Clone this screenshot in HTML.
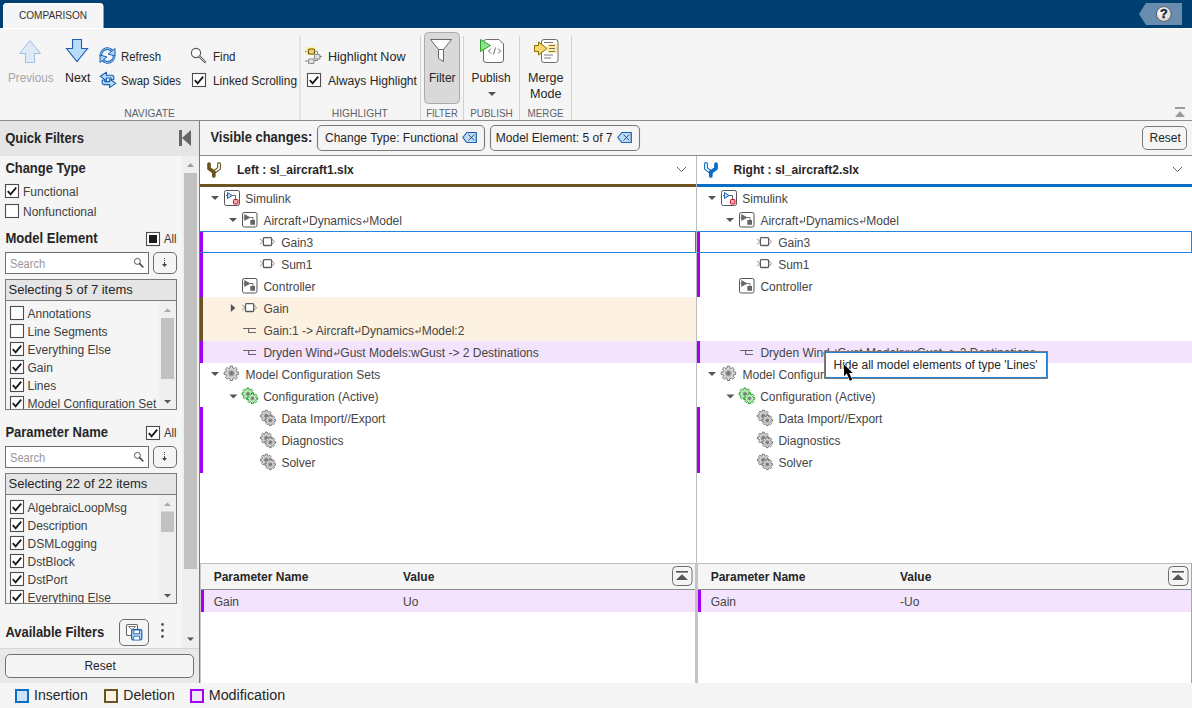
<!DOCTYPE html>
<html><head><meta charset="utf-8">
<style>
html,body{margin:0;padding:0;background:#f5f5f5;width:1192px;height:708px;overflow:hidden}
svg{display:block}
text{font-family:"Liberation Sans",sans-serif;font-size:12px;fill:#262626}
.b{font-weight:bold}
.t{fill:#3a3a3a}
.lab{font-size:10.5px;fill:#5d636b}
</style></head><body>
<svg width="1192" height="708" viewBox="0 0 1192 708">

<rect x="0" y="0" width="1192" height="28" fill="#003f72"/>
<rect x="0" y="28" width="1192" height="1" fill="#ffffff"/>
<path d="M3.5 28 V6 Q3.5 3.5 6 3.5 H100.5 Q103 3.5 103 6 V28" fill="#f5f5f5" stroke="#ffffff" stroke-width="1"/>
<text x="19" y="19" style="font-size:11px;fill:#333" textLength="68" lengthAdjust="spacingAndGlyphs" >COMPARISON</text>
<polygon points="1146,3 1182,3 1182,25 1146,25 1139,14" fill="#6a8cae"/>
<defs><radialGradient id="hg" cx="0.4" cy="0.35" r="0.7"><stop offset="0" stop-color="#ffffff"/><stop offset="1" stop-color="#d0d0d0"/></radialGradient></defs>
<circle cx="1163.8" cy="14" r="7.4" fill="url(#hg)" stroke="#3c4a5a" stroke-width="0.8"/>
<text x="1163.8" y="18.4" style="font-size:12.5px;fill:#1d2a3a;font-weight:bold" text-anchor="middle" stroke="#1d2a3a" stroke-width="0.5">?</text>
<rect x="0" y="29" width="1192" height="91" fill="#f5f5f5"/>
<rect x="0" y="120" width="1192" height="1" fill="#8c8c8c"/>
<rect x="299.5" y="36" width="1" height="84" fill="#d2d2d2"/>
<rect x="420" y="36" width="1" height="84" fill="#d2d2d2"/>
<rect x="463" y="36" width="1" height="84" fill="#d2d2d2"/>
<rect x="519" y="36" width="1" height="84" fill="#d2d2d2"/>
<rect x="571" y="36" width="1" height="84" fill="#d2d2d2"/>
<path d="M30 40.5 L40.5 53.5 L34.5 53.5 L34.5 62.5 L25.5 62.5 L25.5 53.5 L19.5 53.5 Z" fill="#deebf7" stroke="#9fbfdf" stroke-width="1"/>
<text x="8" y="81.6" style="fill:#a6a6a6" textLength="45.5" lengthAdjust="spacingAndGlyphs" >Previous</text>
<path d="M72.5 39.5 L81.5 39.5 L81.5 48.5 L87.5 48.5 L77 61.5 L66.5 48.5 L72.5 48.5 Z" fill="#b9dcfb" stroke="#1f5fb0" stroke-width="1.1"/>
<text x="65" y="81.6" style="fill:#1a1a1a" textLength="25.5" lengthAdjust="spacingAndGlyphs" >Next</text>
<g fill="none" stroke-linecap="butt"><path d="M101.3 57 A6.3 6.3 0 0 1 112.3 51.2" stroke="#1a62b8" stroke-width="2.8"/><path d="M101.3 57 A6.3 6.3 0 0 1 112.3 51.2" stroke="#a9d3f7" stroke-width="1"/><path d="M113.7 54 A6.3 6.3 0 0 1 102.7 59.8" stroke="#1a62b8" stroke-width="2.8"/><path d="M113.7 54 A6.3 6.3 0 0 1 102.7 59.8" stroke="#a9d3f7" stroke-width="1"/></g><path d="M115 48.5 L115 56 L108 54 Z" fill="#a9d3f7" stroke="#1a62b8" stroke-width="1" stroke-linejoin="round"/><path d="M100 62.5 L100 55 L107 57 Z" fill="#a9d3f7" stroke="#1a62b8" stroke-width="1" stroke-linejoin="round"/>
<text x="121" y="61" textLength="40" lengthAdjust="spacingAndGlyphs" >Refresh</text>
<g stroke="#1a5fb4" stroke-width="1.1" fill="#b3dbfb" stroke-linejoin="round"><path d="M100.2 76.3 L106.5 72.2 V75.3 H112 Q113.8 75.3 113.8 77 V79.8 H111.2 V78 H106.5 V80.6 Z"/><path d="M115.8 83.4 L109.6 87.6 V84.6 H104 Q102.2 84.6 102.2 82.8 V80 H104.8 V81.6 H109.6 V79.3 Z"/></g>
<text x="121" y="84.5" textLength="60" lengthAdjust="spacingAndGlyphs" >Swap Sides</text>
<circle cx="196" cy="53" r="4.6" fill="#fafafa" stroke="#555" stroke-width="1.1"/><path d="M199.5 56.5 L205 62" stroke="#555" stroke-width="2.4" stroke-linecap="round"/><path d="M199.5 56.5 L205 62" stroke="#e6e6e6" stroke-width="0.9" stroke-linecap="round"/>
<text x="213" y="61" textLength="22.5" lengthAdjust="spacingAndGlyphs" >Find</text>
<rect x="192.5" y="73.5" width="13" height="13" fill="#ffffff" stroke="#4d4d4d" stroke-width="1.1"/>
<path d="M194.8 80.2 L197.6 83.3 L203.2 76.6" fill="none" stroke="#1a1a1a" stroke-width="1.85" stroke-linejoin="miter" stroke-linecap="butt"/>
<text x="213" y="84.8" textLength="84" lengthAdjust="spacingAndGlyphs" >Linked Scrolling</text>
<g stroke="#8a8a8a" stroke-width="1" fill="none"><path d="M305 51.5 H308 M314.5 51.5 H317.5 V54.5 M320 56.5 H322 M314 60.5 H317.5 V58.5 M305 61 H308"/></g><rect x="306.5" y="47.5" width="9" height="7.5" fill="#ffe96b"/><rect x="308.5" y="49" width="6" height="5" rx="1" fill="#f3d36d" stroke="#6b5a20" stroke-width="1.1"/><rect x="314.5" y="54.5" width="5.5" height="4.5" rx="1" fill="#e3e3e3" stroke="#8c8c8c" stroke-width="1.1"/><rect x="308.5" y="59" width="5.5" height="4.5" rx="1" fill="#e3e3e3" stroke="#8c8c8c" stroke-width="1.1"/>
<text x="328" y="61" textLength="77.5" lengthAdjust="spacingAndGlyphs" >Highlight Now</text>
<rect x="307.5" y="73.5" width="13" height="13" fill="#ffffff" stroke="#4d4d4d" stroke-width="1.1"/>
<path d="M309.8 80.2 L312.6 83.3 L318.2 76.6" fill="none" stroke="#1a1a1a" stroke-width="1.85" stroke-linejoin="miter" stroke-linecap="butt"/>
<text x="328" y="84.8" textLength="89" lengthAdjust="spacingAndGlyphs" >Always Highlight</text>
<rect x="424.5" y="32.5" width="35" height="71" rx="4" fill="#d9d9d9" stroke="#ababab" stroke-width="1"/>
<path d="M430.5 39.5 H451.5 L443.5 49.5 V61.5 L438.5 58.5 V49.5 Z" fill="#ffffff" stroke="#666" stroke-width="1"/><path d="M438.5 49.5 H443.5" stroke="#666" stroke-width="1"/>
<text x="429" y="81.7" textLength="26.5" lengthAdjust="spacingAndGlyphs" >Filter</text>
<path d="M486.5 39.5 H499 L503.5 44 V60 Q503.5 62.5 501 62.5 H486 Q483.5 62.5 483.5 60 V42 Q483.5 39.5 486.5 39.5 Z" fill="#ffffff" stroke="#6b6b6b" stroke-width="1"/><path d="M491 48.5 L488.5 51 L491 53.5 M495.5 47.5 L493.5 54.5 M498 48.5 L500.5 51 L498 53.5" fill="none" stroke="#555" stroke-width="0.9"/><path d="M480.5 39.5 L490.5 45.5 L480.5 51.5 Z" fill="#8fe08f" stroke="#28a428" stroke-width="1"/>
<text x="471.5" y="81.7" textLength="39" lengthAdjust="spacingAndGlyphs" >Publish</text>
<path d="M488 92 H496 L492 96 Z" fill="#555"/>
<rect x="541.5" y="39.5" width="16.5" height="23" rx="2.5" fill="#ffffff" stroke="#6b6b6b" stroke-width="1"/>
<rect x="547" y="44" width="10" height="9" fill="#ffeaa0"/>
<g stroke="#666" stroke-width="0.9"><path d="M544 42.5 H553 M549 45.5 H555 M549 48.5 H555 M549 51.5 H555 M544 55 H553 M544 58 H551"/></g>
<path d="M534.5 45.5 H538.5 V42 L547 48.5 L538.5 55 V51.5 H534.5 Z" fill="#f7d86a" stroke="#8a6d00" stroke-width="1"/>
<text x="528" y="81.7" textLength="35.5" lengthAdjust="spacingAndGlyphs" >Merge</text>
<text x="530" y="97.7" textLength="31.5" lengthAdjust="spacingAndGlyphs" >Mode</text>
<text x="124.3" y="116.6" class="lab" textLength="50.5" lengthAdjust="spacingAndGlyphs" >NAVIGATE</text>
<text x="331.8" y="116.6" class="lab" textLength="56.1" lengthAdjust="spacingAndGlyphs" >HIGHLIGHT</text>
<text x="426.2" y="116.6" class="lab" textLength="31.7" lengthAdjust="spacingAndGlyphs" >FILTER</text>
<text x="470.2" y="116.6" class="lab" textLength="42.5" lengthAdjust="spacingAndGlyphs" >PUBLISH</text>
<text x="527.6" y="116.6" class="lab" textLength="36" lengthAdjust="spacingAndGlyphs" >MERGE</text>
<rect x="1175" y="107" width="10" height="2" fill="#9a9a9a"/><path d="M1175 117 L1180 111 L1185 117 Z" fill="#9a9a9a"/>
<rect x="0" y="121" width="199" height="35" fill="#e5e5e5"/>
<rect x="0" y="156" width="199" height="492" fill="#f5f5f5"/>
<rect x="182" y="156" width="17" height="492" fill="#efefef"/>
<rect x="184" y="173" width="13" height="396" fill="#c1c1c1"/>
<path d="M187 167 L190.5 163 L194 167 Z" fill="#a0a0a0"/>
<path d="M187 637.5 L194 637.5 L190.5 641 Z" fill="#555"/>
<rect x="0" y="648" width="199" height="1" fill="#d6d6d6"/>
<rect x="0" y="649" width="199" height="34" fill="#e9e9e9"/>
<text x="5.2" y="143.2" class="b" style="font-size:14px;fill:#262626" textLength="78.8" lengthAdjust="spacingAndGlyphs" >Quick Filters</text>
<rect x="179" y="130" width="3" height="16" fill="#666"/><path d="M191 130 L182 138 L191 146 Z" fill="#666"/>
<text x="5.4" y="172.9" class="b" style="font-size:14px;fill:#262626" textLength="80.3" lengthAdjust="spacingAndGlyphs" >Change Type</text>
<rect x="5.5" y="184.5" width="13" height="13" fill="#ffffff" stroke="#4d4d4d" stroke-width="1.1"/>
<path d="M7.8 191.2 L10.6 194.3 L16.2 187.6" fill="none" stroke="#1a1a1a" stroke-width="1.85" stroke-linejoin="miter" stroke-linecap="butt"/>
<text x="23" y="195.6" style="fill:#404040" >Functional</text>
<rect x="5.5" y="204.5" width="13" height="13" fill="#ffffff" stroke="#4d4d4d" stroke-width="1.1"/>
<text x="23" y="215.5" style="fill:#404040" >Nonfunctional</text>
<text x="5.4" y="243" class="b" style="font-size:14px;fill:#262626" textLength="92.2" lengthAdjust="spacingAndGlyphs" >Model Element</text>
<rect x="146.5" y="232.5" width="13" height="13" fill="#ffffff" stroke="#4d4d4d" stroke-width="1.1"/>
<rect x="149" y="235" width="8" height="8" fill="#1a1a1a"/>
<text x="164" y="243" style="fill:#333" textLength="12.5" lengthAdjust="spacingAndGlyphs" >All</text>
<rect x="5.5" y="252.5" width="143" height="21" fill="#ffffff" stroke="#6e6e6e" stroke-width="1"/>
<text x="10" y="267.8" style="fill:#999999" textLength="35.3" lengthAdjust="spacingAndGlyphs" >Search</text>
<circle cx="137.4" cy="261.4" r="3" fill="none" stroke="#555" stroke-width="1"/><path d="M139.6 263.6 L142.8 266.8" stroke="#555" stroke-width="1.8" stroke-linecap="round"/>
<rect x="153.5" y="252.5" width="23" height="21" rx="4.5" fill="#f5f5f5" stroke="#6e6e6e" stroke-width="1"/>
<g fill="#444"><rect x="164" y="258" width="1" height="1"/><rect x="164" y="260" width="1" height="1"/><rect x="164" y="262" width="1" height="2"/><path d="M162 264 H167 L164.5 267 Z"/></g>
<rect x="5.5" y="279.5" width="171" height="130" fill="#f5f5f5" stroke="#7a7a7a" stroke-width="1"/>
<rect x="6" y="280" width="170" height="20" fill="#e5e5e5"/>
<rect x="6" y="300" width="170" height="1" fill="#7a7a7a"/>
<text x="8.5" y="293.8" style="font-size:13px;fill:#262626" >Selecting 5 of 7 items</text>
<rect x="159" y="301" width="17" height="108" fill="#efefef"/>
<rect x="161" y="318" width="13" height="61" fill="#c1c1c1"/>
<path d="M164 312 L167.5 308.5 L171 312 Z" fill="#a8a8a8"/>
<path d="M164 400 L171 400 L167.5 403.5 Z" fill="#555"/>
<clipPath id="clip0"><rect x="6" y="301" width="153" height="108"/></clipPath>
<g clip-path="url(#clip0)">
<rect x="10.5" y="306.5" width="13" height="13" fill="#ffffff" stroke="#4d4d4d" stroke-width="1.1"/>
<text x="27.5" y="317.5" style="fill:#404040" >Annotations</text>
<rect x="10.5" y="324.5" width="13" height="13" fill="#ffffff" stroke="#4d4d4d" stroke-width="1.1"/>
<text x="27.5" y="335.5" style="fill:#404040" >Line Segments</text>
<rect x="10.5" y="342.5" width="13" height="13" fill="#ffffff" stroke="#4d4d4d" stroke-width="1.1"/>
<path d="M12.8 349.2 L15.6 352.3 L21.2 345.6" fill="none" stroke="#1a1a1a" stroke-width="1.85" stroke-linejoin="miter" stroke-linecap="butt"/>
<text x="27.5" y="353.5" style="fill:#404040" >Everything Else</text>
<rect x="10.5" y="360.5" width="13" height="13" fill="#ffffff" stroke="#4d4d4d" stroke-width="1.1"/>
<path d="M12.8 367.2 L15.6 370.3 L21.2 363.6" fill="none" stroke="#1a1a1a" stroke-width="1.85" stroke-linejoin="miter" stroke-linecap="butt"/>
<text x="27.5" y="371.5" style="fill:#404040" >Gain</text>
<rect x="10.5" y="378.5" width="13" height="13" fill="#ffffff" stroke="#4d4d4d" stroke-width="1.1"/>
<path d="M12.8 385.2 L15.6 388.3 L21.2 381.6" fill="none" stroke="#1a1a1a" stroke-width="1.85" stroke-linejoin="miter" stroke-linecap="butt"/>
<text x="27.5" y="389.5" style="fill:#404040" >Lines</text>
<rect x="10.5" y="396.5" width="13" height="13" fill="#ffffff" stroke="#4d4d4d" stroke-width="1.1"/>
<path d="M12.8 403.2 L15.6 406.3 L21.2 399.6" fill="none" stroke="#1a1a1a" stroke-width="1.85" stroke-linejoin="miter" stroke-linecap="butt"/>
<text x="27.5" y="407.5" style="fill:#404040" >Model Configuration Set</text>
</g>
<text x="5.4" y="437" class="b" style="font-size:14px;fill:#262626" textLength="102.6" lengthAdjust="spacingAndGlyphs" >Parameter Name</text>
<rect x="146.5" y="426.5" width="13" height="13" fill="#ffffff" stroke="#4d4d4d" stroke-width="1.1"/>
<path d="M148.8 433.2 L151.6 436.3 L157.2 429.6" fill="none" stroke="#1a1a1a" stroke-width="1.85"/>
<text x="164" y="437" style="fill:#333" textLength="12.5" lengthAdjust="spacingAndGlyphs" >All</text>
<rect x="5.5" y="446.5" width="143" height="21" fill="#ffffff" stroke="#6e6e6e" stroke-width="1"/>
<text x="10" y="461.8" style="fill:#999999" textLength="35.3" lengthAdjust="spacingAndGlyphs" >Search</text>
<circle cx="137.4" cy="455.4" r="3" fill="none" stroke="#555" stroke-width="1"/><path d="M139.6 457.6 L142.8 460.8" stroke="#555" stroke-width="1.8" stroke-linecap="round"/>
<rect x="153.5" y="446.5" width="23" height="21" rx="4.5" fill="#f5f5f5" stroke="#6e6e6e" stroke-width="1"/>
<g fill="#444"><rect x="164" y="452" width="1" height="1"/><rect x="164" y="454" width="1" height="1"/><rect x="164" y="456" width="1" height="2"/><path d="M162 458 H167 L164.5 461 Z"/></g>
<rect x="5.5" y="473.5" width="171" height="130" fill="#f5f5f5" stroke="#7a7a7a" stroke-width="1"/>
<rect x="6" y="474" width="170" height="20" fill="#e5e5e5"/>
<rect x="6" y="494" width="170" height="1" fill="#7a7a7a"/>
<text x="8.5" y="487.8" style="font-size:13px;fill:#262626" >Selecting 22 of 22 items</text>
<rect x="159" y="495" width="17" height="108" fill="#efefef"/>
<rect x="161" y="511.5" width="13" height="20.5" fill="#c1c1c1"/>
<path d="M164 506 L167.5 502.5 L171 506 Z" fill="#a8a8a8"/>
<path d="M164 594 L171 594 L167.5 597.5 Z" fill="#555"/>
<clipPath id="clip194"><rect x="6" y="495" width="153" height="108"/></clipPath>
<g clip-path="url(#clip194)">
<rect x="10.5" y="500.5" width="13" height="13" fill="#ffffff" stroke="#4d4d4d" stroke-width="1.1"/>
<path d="M12.8 507.2 L15.6 510.3 L21.2 503.6" fill="none" stroke="#1a1a1a" stroke-width="1.85" stroke-linejoin="miter" stroke-linecap="butt"/>
<text x="27.5" y="511.5" style="fill:#404040" >AlgebraicLoopMsg</text>
<rect x="10.5" y="518.5" width="13" height="13" fill="#ffffff" stroke="#4d4d4d" stroke-width="1.1"/>
<path d="M12.8 525.2 L15.6 528.3 L21.2 521.6" fill="none" stroke="#1a1a1a" stroke-width="1.85" stroke-linejoin="miter" stroke-linecap="butt"/>
<text x="27.5" y="529.5" style="fill:#404040" >Description</text>
<rect x="10.5" y="536.5" width="13" height="13" fill="#ffffff" stroke="#4d4d4d" stroke-width="1.1"/>
<path d="M12.8 543.2 L15.6 546.3 L21.2 539.6" fill="none" stroke="#1a1a1a" stroke-width="1.85" stroke-linejoin="miter" stroke-linecap="butt"/>
<text x="27.5" y="547.5" style="fill:#404040" >DSMLogging</text>
<rect x="10.5" y="554.5" width="13" height="13" fill="#ffffff" stroke="#4d4d4d" stroke-width="1.1"/>
<path d="M12.8 561.2 L15.6 564.3 L21.2 557.6" fill="none" stroke="#1a1a1a" stroke-width="1.85" stroke-linejoin="miter" stroke-linecap="butt"/>
<text x="27.5" y="565.5" style="fill:#404040" >DstBlock</text>
<rect x="10.5" y="572.5" width="13" height="13" fill="#ffffff" stroke="#4d4d4d" stroke-width="1.1"/>
<path d="M12.8 579.2 L15.6 582.3 L21.2 575.6" fill="none" stroke="#1a1a1a" stroke-width="1.85" stroke-linejoin="miter" stroke-linecap="butt"/>
<text x="27.5" y="583.5" style="fill:#404040" >DstPort</text>
<rect x="10.5" y="590.5" width="13" height="13" fill="#ffffff" stroke="#4d4d4d" stroke-width="1.1"/>
<path d="M12.8 597.2 L15.6 600.3 L21.2 593.6" fill="none" stroke="#1a1a1a" stroke-width="1.85" stroke-linejoin="miter" stroke-linecap="butt"/>
<text x="27.5" y="601.5" style="fill:#404040" >Everything Else</text>
</g>
<text x="5.4" y="637" class="b" style="font-size:14px;fill:#262626" textLength="98.9" lengthAdjust="spacingAndGlyphs" >Available Filters</text>
<rect x="119.5" y="619.5" width="29" height="26" rx="4.5" fill="#f5f5f5" stroke="#6e6e6e" stroke-width="1"/>
<rect x="126.5" y="624.5" width="11" height="11" rx="1.3" fill="#fff" stroke="#666" stroke-width="1.1"/><path d="M128.5 626.5 H135.5 L133 629.2 H131 Z" fill="none" stroke="#666" stroke-width="0.9"/><rect x="131.6" y="629.6" width="10.2" height="10.2" rx="1.2" fill="#bfdcf7" stroke="#1a62b8" stroke-width="1.2"/><rect x="133.8" y="630" width="5.8" height="3.8" fill="#fff" stroke="#1a62b8" stroke-width="0.9"/><path d="M133.8 639.6 V636.2 H139.6 V639.6" fill="#fff" stroke="#1a62b8" stroke-width="0.9"/>
<g fill="#555"><circle cx="162.5" cy="624.5" r="1.4"/><circle cx="162.5" cy="630.5" r="1.4"/><circle cx="162.5" cy="636.5" r="1.4"/></g>
<rect x="5.5" y="654.5" width="188" height="23" rx="4.5" fill="#f5f5f5" stroke="#707070" stroke-width="1"/>
<text x="84.4" y="670" style="fill:#262626" >Reset</text>
<rect x="199" y="121" width="1" height="562" fill="#7a7a7a"/>
<rect x="200" y="121" width="992" height="34" fill="#f5f5f5"/>
<rect x="200" y="155" width="992" height="1" fill="#8c8c8c"/>
<text x="210.4" y="142.2" class="b" style="font-size:14px;fill:#262626" textLength="101.9" lengthAdjust="spacingAndGlyphs" >Visible changes:</text>
<rect x="317.5" y="125.5" width="167" height="25" rx="4.5" fill="#f5f5f5" stroke="#7a7a7a" stroke-width="1.1"/>
<text x="325" y="142" style="fill:#262626" >Change Type: Functional</text>
<path d="M462.8 137.5 L466.8 132.5 H476.3 V142.5 H466.8 Z" fill="#bfdcf7" stroke="#1a5fb4" stroke-width="1.2" stroke-linejoin="round"/><path d="M468.5 134.5 L474.3 140.5 M474.3 134.5 L468.5 140.5" stroke="#1f3f70" stroke-width="0.9"/>
<rect x="490.5" y="125.5" width="149" height="25" rx="4.5" fill="#f5f5f5" stroke="#7a7a7a" stroke-width="1.1"/>
<text x="495.8" y="142" style="fill:#262626" >Model Element: 5 of 7</text>
<path d="M617.8 137.5 L621.8 132.5 H631.3 V142.5 H621.8 Z" fill="#bfdcf7" stroke="#1a5fb4" stroke-width="1.2" stroke-linejoin="round"/><path d="M623.5 134.5 L629.3 140.5 M629.3 134.5 L623.5 140.5" stroke="#1f3f70" stroke-width="0.9"/>
<rect x="1142.5" y="126.5" width="44" height="23" rx="4.5" fill="#f5f5f5" stroke="#7a7a7a" stroke-width="1"/>
<text x="1149.5" y="142.3" style="fill:#262626" >Reset</text>
<rect x="200" y="156" width="992" height="527" fill="#ffffff"/>
<rect x="200" y="297" width="496" height="44" fill="#fdf1e1"/>
<rect x="200" y="297" width="3" height="44" fill="#6e5322"/>
<rect x="200" y="341" width="496" height="22" fill="#f3e3fc"/>
<rect x="200" y="231" width="3" height="66" fill="#a100f2"/>
<rect x="200" y="341" width="3" height="22" fill="#a100f2"/>
<rect x="200" y="407" width="3" height="66" fill="#a100f2"/>
<rect x="200.5" y="231.5" width="495" height="21" fill="none" stroke="#2484da" stroke-width="1"/>
<rect x="200" y="232" width="3" height="20" fill="#a100f2"/>
<path d="M211 196 H219 L215 200 Z" fill="#555"/>
<rect x="224.5" y="190.5" width="15" height="15" rx="1.8" fill="#fff" stroke="#555" stroke-width="1"/>
<path d="M227.5 192.5 L232 195.5 L227.5 198.5 Z" fill="#bfe0fb" stroke="#1a62b8" stroke-width="1"/>
<path d="M226 195.5 H227.5 M232 195.5 H235.5 V199" fill="none" stroke="#555" stroke-width="0.9"/>
<rect x="233.5" y="199.5" width="4.5" height="4.5" rx="0.8" fill="#f7a8a8" stroke="#c8102e" stroke-width="1"/>
<text x="245.3" y="202.8" style="fill:#454545" >Simulink</text>
<path d="M229 218 H237 L233 222 Z" fill="#555"/>
<rect x="242.5" y="212.5" width="14.5" height="14.5" rx="1.8" fill="#fff" stroke="#555" stroke-width="1"/>
<path d="M244.5 214.5 L250 217.5 L244.5 220.5 Z" fill="#666" stroke="#666" stroke-width="0.6"/>
<path d="M243.5 217.5 H244.5 M250 217.5 H253 V220" fill="none" stroke="#666" stroke-width="0.9"/>
<rect x="250.3" y="220" width="4.7" height="4.8" fill="#666"/>
<text x="263.4" y="224.6" style="fill:#454545" >Aircraft</text>
<path d="M307.50625 217.2 V221.79999999999998 H302.90625 M304.60625 220.1 L302.90625 221.79999999999998 L304.60625 223.5" fill="none" stroke="#505050" stroke-width="0.95"/>
<text x="309.01" y="224.6" style="fill:#454545" >Dynamics</text>
<path d="M367.78125000000006 217.2 V221.79999999999998 H363.18125000000003 M364.88125 220.1 L363.18125000000003 221.79999999999998 L364.88125 223.5" fill="none" stroke="#505050" stroke-width="0.95"/>
<text x="369.28" y="224.6" style="fill:#454545" >Model</text>
<rect x="263.4" y="237.70000000000002" width="8.2" height="7.8" rx="0.9" fill="#fff" stroke="#5c5c5c" stroke-width="1.3"/>
<path d="M260.0 239.0 L262.9 241.60000000000002 L260.0 244.20000000000002 M272.09999999999997 239.10000000000002 L274.5 241.60000000000002 L272.09999999999997 244.10000000000002" fill="none" stroke="#777" stroke-width="0.8"/>
<text x="281.2" y="246.5" style="fill:#454545" >Gain3</text>
<rect x="263.4" y="259.7" width="8.2" height="7.8" rx="0.9" fill="#fff" stroke="#5c5c5c" stroke-width="1.3"/>
<path d="M260.0 261.0 L262.9 263.6 L260.0 266.2 M272.09999999999997 261.1 L274.5 263.6 L272.09999999999997 266.1" fill="none" stroke="#777" stroke-width="0.8"/>
<text x="281.2" y="268.5" style="fill:#454545" >Sum1</text>
<rect x="242.5" y="278.5" width="14.5" height="14.5" rx="1.8" fill="#fff" stroke="#555" stroke-width="1"/>
<path d="M244.5 280.5 L250 283.5 L244.5 286.5 Z" fill="#666" stroke="#666" stroke-width="0.6"/>
<path d="M243.5 283.5 H244.5 M250 283.5 H253 V286" fill="none" stroke="#666" stroke-width="0.9"/>
<rect x="250.3" y="286" width="4.7" height="4.8" fill="#666"/>
<text x="263.4" y="290.6" style="fill:#454545" >Controller</text>
<path d="M230.8 304 V312 L235.3 308 Z" fill="#555"/>
<rect x="245.5" y="303.7" width="8.2" height="7.8" rx="0.9" fill="#fff" stroke="#5c5c5c" stroke-width="1.3"/>
<path d="M242.10000000000002 305.0 L245.0 307.6 L242.10000000000002 310.2 M254.20000000000002 305.1 L256.6 307.6 L254.20000000000002 310.1" fill="none" stroke="#777" stroke-width="0.8"/>
<text x="263.4" y="312.6" style="fill:#454545" >Gain</text>
<path d="M243 328.5 H256 M248.6 328 V332.5 H256" fill="none" stroke="#666" stroke-width="1.1"/>
<text x="263.4" y="334.6" style="fill:#454545" >Gain:1 -&gt; Aircraft</text>
<path d="M359.871875 327.20000000000005 V331.8 H355.27187499999997 M356.97187499999995 330.1 L355.27187499999997 331.8 L356.97187499999995 333.5" fill="none" stroke="#505050" stroke-width="0.95"/>
<text x="361.37" y="334.6" style="fill:#454545" >Dynamics</text>
<path d="M420.146875 327.20000000000005 V331.8 H415.546875 M417.246875 330.1 L415.546875 331.8 L417.246875 333.5" fill="none" stroke="#505050" stroke-width="0.95"/>
<text x="421.65" y="334.6" style="fill:#454545" >Model:2</text>
<path d="M243 350.5 H256 M248.6 350 V354.5 H256" fill="none" stroke="#666" stroke-width="1.1"/>
<text x="263.4" y="356.6" style="fill:#454545" >Dryden Wind</text>
<path d="M338.85625 349.20000000000005 V353.8 H334.25624999999997 M335.95624999999995 352.1 L334.25624999999997 353.8 L335.95624999999995 355.5" fill="none" stroke="#505050" stroke-width="0.95"/>
<text x="340.36" y="356.6" style="fill:#454545" >Gust Models:wGust -&gt; 2 Destinations</text>
<path d="M211 372 H219 L215 376 Z" fill="#555"/>
<defs><radialGradient id="gg" cx="0.5" cy="0.5" r="0.5"><stop offset="0" stop-color="#6a6a6a"/><stop offset="0.28" stop-color="#8c8c8c"/><stop offset="0.5" stop-color="#cfcfcf"/><stop offset="1" stop-color="#e6e6e6"/></radialGradient><radialGradient id="gG" cx="0.5" cy="0.5" r="0.5"><stop offset="0" stop-color="#6a6a6a"/><stop offset="0.28" stop-color="#8c9c8c"/><stop offset="0.5" stop-color="#c4eec4"/><stop offset="1" stop-color="#d6f6d6"/></radialGradient></defs>
<path d="M230.06 367.92 L230.20 366.10 L232.60 366.10 L232.74 367.92 L234.26 368.55 L235.64 367.36 L237.34 369.06 L236.15 370.44 L236.78 371.96 L238.60 372.10 L238.60 374.50 L236.78 374.64 L236.15 376.16 L237.34 377.54 L235.64 379.24 L234.26 378.05 L232.74 378.68 L232.60 380.50 L230.20 380.50 L230.06 378.68 L228.54 378.05 L227.16 379.24 L225.46 377.54 L226.65 376.16 L226.02 374.64 L224.20 374.50 L224.20 372.10 L226.02 371.96 L226.65 370.44 L225.46 369.06 L227.16 367.36 L228.54 368.55 Z" fill="url(#gg)" stroke="#7a7a7a" stroke-width="1" stroke-linejoin="round"/>
<text x="245.5" y="378.6" style="fill:#454545" >Model Configuration Sets</text>
<path d="M229.4 394.5 H237.4 L233.4 398.5 Z" fill="#555"/>
<path d="M246.82 389.55 L246.93 388.08 L248.87 388.08 L248.98 389.55 L250.21 390.06 L251.33 389.10 L252.70 390.47 L251.74 391.59 L252.25 392.82 L253.72 392.93 L253.72 394.87 L252.25 394.98 L251.74 396.21 L252.70 397.33 L251.33 398.70 L250.21 397.74 L248.98 398.25 L248.87 399.72 L246.93 399.72 L246.82 398.25 L245.59 397.74 L244.47 398.70 L243.10 397.33 L244.06 396.21 L243.55 394.98 L242.08 394.87 L242.08 392.93 L243.55 392.82 L244.06 391.59 L243.10 390.47 L244.47 389.10 L245.59 390.06 Z" fill="url(#gG)" stroke="#1e9e1e" stroke-width="1" stroke-linejoin="round"/>
<path d="M251.43 394.49 L251.53 393.17 L253.27 393.17 L253.37 394.49 L254.48 394.95 L255.48 394.09 L256.71 395.32 L255.85 396.32 L256.31 397.43 L257.63 397.53 L257.63 399.27 L256.31 399.37 L255.85 400.48 L256.71 401.48 L255.48 402.71 L254.48 401.85 L253.37 402.31 L253.27 403.63 L251.53 403.63 L251.43 402.31 L250.32 401.85 L249.32 402.71 L248.09 401.48 L248.95 400.48 L248.49 399.37 L247.17 399.27 L247.17 397.53 L248.49 397.43 L248.95 396.32 L248.09 395.32 L249.32 394.09 L250.32 394.95 Z" fill="url(#gG)" stroke="#1e9e1e" stroke-width="1" stroke-linejoin="round"/>
<text x="263.2" y="400.6" style="fill:#454545" >Configuration (Active)</text>
<path d="M265.22 411.65 L265.33 410.18 L267.27 410.18 L267.38 411.65 L268.61 412.16 L269.73 411.20 L271.10 412.57 L270.14 413.69 L270.65 414.92 L272.12 415.03 L272.12 416.97 L270.65 417.08 L270.14 418.31 L271.10 419.43 L269.73 420.80 L268.61 419.84 L267.38 420.35 L267.27 421.82 L265.33 421.82 L265.22 420.35 L263.99 419.84 L262.87 420.80 L261.50 419.43 L262.46 418.31 L261.95 417.08 L260.48 416.97 L260.48 415.03 L261.95 414.92 L262.46 413.69 L261.50 412.57 L262.87 411.20 L263.99 412.16 Z" fill="url(#gg)" stroke="#767676" stroke-width="1" stroke-linejoin="round"/>
<path d="M269.33 416.49 L269.43 415.17 L271.17 415.17 L271.27 416.49 L272.38 416.95 L273.38 416.09 L274.61 417.32 L273.75 418.32 L274.21 419.43 L275.53 419.53 L275.53 421.27 L274.21 421.37 L273.75 422.48 L274.61 423.48 L273.38 424.71 L272.38 423.85 L271.27 424.31 L271.17 425.63 L269.43 425.63 L269.33 424.31 L268.22 423.85 L267.22 424.71 L265.99 423.48 L266.85 422.48 L266.39 421.37 L265.07 421.27 L265.07 419.53 L266.39 419.43 L266.85 418.32 L265.99 417.32 L267.22 416.09 L268.22 416.95 Z" fill="url(#gg)" stroke="#767676" stroke-width="1" stroke-linejoin="round"/>
<text x="281.4" y="422.6" style="fill:#454545" >Data Import//Export</text>
<path d="M265.22 433.65 L265.33 432.18 L267.27 432.18 L267.38 433.65 L268.61 434.16 L269.73 433.20 L271.10 434.57 L270.14 435.69 L270.65 436.92 L272.12 437.03 L272.12 438.97 L270.65 439.08 L270.14 440.31 L271.10 441.43 L269.73 442.80 L268.61 441.84 L267.38 442.35 L267.27 443.82 L265.33 443.82 L265.22 442.35 L263.99 441.84 L262.87 442.80 L261.50 441.43 L262.46 440.31 L261.95 439.08 L260.48 438.97 L260.48 437.03 L261.95 436.92 L262.46 435.69 L261.50 434.57 L262.87 433.20 L263.99 434.16 Z" fill="url(#gg)" stroke="#767676" stroke-width="1" stroke-linejoin="round"/>
<path d="M269.33 438.49 L269.43 437.17 L271.17 437.17 L271.27 438.49 L272.38 438.95 L273.38 438.09 L274.61 439.32 L273.75 440.32 L274.21 441.43 L275.53 441.53 L275.53 443.27 L274.21 443.37 L273.75 444.48 L274.61 445.48 L273.38 446.71 L272.38 445.85 L271.27 446.31 L271.17 447.63 L269.43 447.63 L269.33 446.31 L268.22 445.85 L267.22 446.71 L265.99 445.48 L266.85 444.48 L266.39 443.37 L265.07 443.27 L265.07 441.53 L266.39 441.43 L266.85 440.32 L265.99 439.32 L267.22 438.09 L268.22 438.95 Z" fill="url(#gg)" stroke="#767676" stroke-width="1" stroke-linejoin="round"/>
<text x="281.4" y="444.6" style="fill:#454545" >Diagnostics</text>
<path d="M265.22 455.65 L265.33 454.18 L267.27 454.18 L267.38 455.65 L268.61 456.16 L269.73 455.20 L271.10 456.57 L270.14 457.69 L270.65 458.92 L272.12 459.03 L272.12 460.97 L270.65 461.08 L270.14 462.31 L271.10 463.43 L269.73 464.80 L268.61 463.84 L267.38 464.35 L267.27 465.82 L265.33 465.82 L265.22 464.35 L263.99 463.84 L262.87 464.80 L261.50 463.43 L262.46 462.31 L261.95 461.08 L260.48 460.97 L260.48 459.03 L261.95 458.92 L262.46 457.69 L261.50 456.57 L262.87 455.20 L263.99 456.16 Z" fill="url(#gg)" stroke="#767676" stroke-width="1" stroke-linejoin="round"/>
<path d="M269.33 460.49 L269.43 459.17 L271.17 459.17 L271.27 460.49 L272.38 460.95 L273.38 460.09 L274.61 461.32 L273.75 462.32 L274.21 463.43 L275.53 463.53 L275.53 465.27 L274.21 465.37 L273.75 466.48 L274.61 467.48 L273.38 468.71 L272.38 467.85 L271.27 468.31 L271.17 469.63 L269.43 469.63 L269.33 468.31 L268.22 467.85 L267.22 468.71 L265.99 467.48 L266.85 466.48 L266.39 465.37 L265.07 465.27 L265.07 463.53 L266.39 463.43 L266.85 462.32 L265.99 461.32 L267.22 460.09 L268.22 460.95 Z" fill="url(#gg)" stroke="#767676" stroke-width="1" stroke-linejoin="round"/>
<text x="281.4" y="466.6" style="fill:#454545" >Solver</text>
<rect x="697" y="341" width="495" height="22" fill="#f3e3fc"/>
<rect x="697" y="231" width="3" height="66" fill="#a100f2"/>
<rect x="697" y="341" width="3" height="22" fill="#a100f2"/>
<rect x="697" y="407" width="3" height="66" fill="#a100f2"/>
<rect x="697.5" y="231.5" width="494" height="21" fill="none" stroke="#2484da" stroke-width="1"/>
<rect x="697" y="232" width="3" height="20" fill="#a100f2"/>
<path d="M708 196 H716 L712 200 Z" fill="#555"/>
<rect x="721.5" y="190.5" width="15" height="15" rx="1.8" fill="#fff" stroke="#555" stroke-width="1"/>
<path d="M724.5 192.5 L729 195.5 L724.5 198.5 Z" fill="#bfe0fb" stroke="#1a62b8" stroke-width="1"/>
<path d="M723 195.5 H724.5 M729 195.5 H732.5 V199" fill="none" stroke="#555" stroke-width="0.9"/>
<rect x="730.5" y="199.5" width="4.5" height="4.5" rx="0.8" fill="#f7a8a8" stroke="#c8102e" stroke-width="1"/>
<text x="742.3" y="202.8" style="fill:#454545" >Simulink</text>
<path d="M726 218 H734 L730 222 Z" fill="#555"/>
<rect x="739.5" y="212.5" width="14.5" height="14.5" rx="1.8" fill="#fff" stroke="#555" stroke-width="1"/>
<path d="M741.5 214.5 L747 217.5 L741.5 220.5 Z" fill="#666" stroke="#666" stroke-width="0.6"/>
<path d="M740.5 217.5 H741.5 M747 217.5 H750 V220" fill="none" stroke="#666" stroke-width="0.9"/>
<rect x="747.3" y="220" width="4.7" height="4.8" fill="#666"/>
<text x="760.4" y="224.6" style="fill:#454545" >Aircraft</text>
<path d="M804.5062499999999 217.2 V221.79999999999998 H799.90625 M801.6062499999999 220.1 L799.90625 221.79999999999998 L801.6062499999999 223.5" fill="none" stroke="#505050" stroke-width="0.95"/>
<text x="806.01" y="224.6" style="fill:#454545" >Dynamics</text>
<path d="M864.7812499999999 217.2 V221.79999999999998 H860.18125 M861.8812499999999 220.1 L860.18125 221.79999999999998 L861.8812499999999 223.5" fill="none" stroke="#505050" stroke-width="0.95"/>
<text x="866.28" y="224.6" style="fill:#454545" >Model</text>
<rect x="760.4000000000001" y="237.70000000000002" width="8.2" height="7.8" rx="0.9" fill="#fff" stroke="#5c5c5c" stroke-width="1.3"/>
<path d="M757.0 239.0 L759.9000000000001 241.60000000000002 L757.0 244.20000000000002 M769.1 239.10000000000002 L771.5 241.60000000000002 L769.1 244.10000000000002" fill="none" stroke="#777" stroke-width="0.8"/>
<text x="778.2" y="246.5" style="fill:#454545" >Gain3</text>
<rect x="760.4000000000001" y="259.7" width="8.2" height="7.8" rx="0.9" fill="#fff" stroke="#5c5c5c" stroke-width="1.3"/>
<path d="M757.0 261.0 L759.9000000000001 263.6 L757.0 266.2 M769.1 261.1 L771.5 263.6 L769.1 266.1" fill="none" stroke="#777" stroke-width="0.8"/>
<text x="778.2" y="268.5" style="fill:#454545" >Sum1</text>
<rect x="739.5" y="278.5" width="14.5" height="14.5" rx="1.8" fill="#fff" stroke="#555" stroke-width="1"/>
<path d="M741.5 280.5 L747 283.5 L741.5 286.5 Z" fill="#666" stroke="#666" stroke-width="0.6"/>
<path d="M740.5 283.5 H741.5 M747 283.5 H750 V286" fill="none" stroke="#666" stroke-width="0.9"/>
<rect x="747.3" y="286" width="4.7" height="4.8" fill="#666"/>
<text x="760.4" y="290.6" style="fill:#454545" >Controller</text>
<path d="M740 350.5 H753 M745.6 350 V354.5 H753" fill="none" stroke="#666" stroke-width="1.1"/>
<text x="760.4" y="356.6" style="fill:#454545" >Dryden Wind</text>
<path d="M835.8562499999999 349.20000000000005 V353.8 H831.25625 M832.95625 352.1 L831.25625 353.8 L832.95625 355.5" fill="none" stroke="#505050" stroke-width="0.95"/>
<text x="837.36" y="356.6" style="fill:#454545" >Gust Models:wGust -&gt; 2 Destinations</text>
<path d="M708 372 H716 L712 376 Z" fill="#555"/>
<path d="M727.06 367.92 L727.20 366.10 L729.60 366.10 L729.74 367.92 L731.26 368.55 L732.64 367.36 L734.34 369.06 L733.15 370.44 L733.78 371.96 L735.60 372.10 L735.60 374.50 L733.78 374.64 L733.15 376.16 L734.34 377.54 L732.64 379.24 L731.26 378.05 L729.74 378.68 L729.60 380.50 L727.20 380.50 L727.06 378.68 L725.54 378.05 L724.16 379.24 L722.46 377.54 L723.65 376.16 L723.02 374.64 L721.20 374.50 L721.20 372.10 L723.02 371.96 L723.65 370.44 L722.46 369.06 L724.16 367.36 L725.54 368.55 Z" fill="url(#gg)" stroke="#7a7a7a" stroke-width="1" stroke-linejoin="round"/>
<text x="742.5" y="378.6" style="fill:#454545" >Model Configuration Sets</text>
<path d="M726.4 394.5 H734.4 L730.4 398.5 Z" fill="#555"/>
<path d="M743.82 389.55 L743.93 388.08 L745.87 388.08 L745.98 389.55 L747.21 390.06 L748.33 389.10 L749.70 390.47 L748.74 391.59 L749.25 392.82 L750.72 392.93 L750.72 394.87 L749.25 394.98 L748.74 396.21 L749.70 397.33 L748.33 398.70 L747.21 397.74 L745.98 398.25 L745.87 399.72 L743.93 399.72 L743.82 398.25 L742.59 397.74 L741.47 398.70 L740.10 397.33 L741.06 396.21 L740.55 394.98 L739.08 394.87 L739.08 392.93 L740.55 392.82 L741.06 391.59 L740.10 390.47 L741.47 389.10 L742.59 390.06 Z" fill="url(#gG)" stroke="#1e9e1e" stroke-width="1" stroke-linejoin="round"/>
<path d="M748.43 394.49 L748.53 393.17 L750.27 393.17 L750.37 394.49 L751.48 394.95 L752.48 394.09 L753.71 395.32 L752.85 396.32 L753.31 397.43 L754.63 397.53 L754.63 399.27 L753.31 399.37 L752.85 400.48 L753.71 401.48 L752.48 402.71 L751.48 401.85 L750.37 402.31 L750.27 403.63 L748.53 403.63 L748.43 402.31 L747.32 401.85 L746.32 402.71 L745.09 401.48 L745.95 400.48 L745.49 399.37 L744.17 399.27 L744.17 397.53 L745.49 397.43 L745.95 396.32 L745.09 395.32 L746.32 394.09 L747.32 394.95 Z" fill="url(#gG)" stroke="#1e9e1e" stroke-width="1" stroke-linejoin="round"/>
<text x="760.2" y="400.6" style="fill:#454545" >Configuration (Active)</text>
<path d="M762.22 411.65 L762.33 410.18 L764.27 410.18 L764.38 411.65 L765.61 412.16 L766.73 411.20 L768.10 412.57 L767.14 413.69 L767.65 414.92 L769.12 415.03 L769.12 416.97 L767.65 417.08 L767.14 418.31 L768.10 419.43 L766.73 420.80 L765.61 419.84 L764.38 420.35 L764.27 421.82 L762.33 421.82 L762.22 420.35 L760.99 419.84 L759.87 420.80 L758.50 419.43 L759.46 418.31 L758.95 417.08 L757.48 416.97 L757.48 415.03 L758.95 414.92 L759.46 413.69 L758.50 412.57 L759.87 411.20 L760.99 412.16 Z" fill="url(#gg)" stroke="#767676" stroke-width="1" stroke-linejoin="round"/>
<path d="M766.33 416.49 L766.43 415.17 L768.17 415.17 L768.27 416.49 L769.38 416.95 L770.38 416.09 L771.61 417.32 L770.75 418.32 L771.21 419.43 L772.53 419.53 L772.53 421.27 L771.21 421.37 L770.75 422.48 L771.61 423.48 L770.38 424.71 L769.38 423.85 L768.27 424.31 L768.17 425.63 L766.43 425.63 L766.33 424.31 L765.22 423.85 L764.22 424.71 L762.99 423.48 L763.85 422.48 L763.39 421.37 L762.07 421.27 L762.07 419.53 L763.39 419.43 L763.85 418.32 L762.99 417.32 L764.22 416.09 L765.22 416.95 Z" fill="url(#gg)" stroke="#767676" stroke-width="1" stroke-linejoin="round"/>
<text x="778.4" y="422.6" style="fill:#454545" >Data Import//Export</text>
<path d="M762.22 433.65 L762.33 432.18 L764.27 432.18 L764.38 433.65 L765.61 434.16 L766.73 433.20 L768.10 434.57 L767.14 435.69 L767.65 436.92 L769.12 437.03 L769.12 438.97 L767.65 439.08 L767.14 440.31 L768.10 441.43 L766.73 442.80 L765.61 441.84 L764.38 442.35 L764.27 443.82 L762.33 443.82 L762.22 442.35 L760.99 441.84 L759.87 442.80 L758.50 441.43 L759.46 440.31 L758.95 439.08 L757.48 438.97 L757.48 437.03 L758.95 436.92 L759.46 435.69 L758.50 434.57 L759.87 433.20 L760.99 434.16 Z" fill="url(#gg)" stroke="#767676" stroke-width="1" stroke-linejoin="round"/>
<path d="M766.33 438.49 L766.43 437.17 L768.17 437.17 L768.27 438.49 L769.38 438.95 L770.38 438.09 L771.61 439.32 L770.75 440.32 L771.21 441.43 L772.53 441.53 L772.53 443.27 L771.21 443.37 L770.75 444.48 L771.61 445.48 L770.38 446.71 L769.38 445.85 L768.27 446.31 L768.17 447.63 L766.43 447.63 L766.33 446.31 L765.22 445.85 L764.22 446.71 L762.99 445.48 L763.85 444.48 L763.39 443.37 L762.07 443.27 L762.07 441.53 L763.39 441.43 L763.85 440.32 L762.99 439.32 L764.22 438.09 L765.22 438.95 Z" fill="url(#gg)" stroke="#767676" stroke-width="1" stroke-linejoin="round"/>
<text x="778.4" y="444.6" style="fill:#454545" >Diagnostics</text>
<path d="M762.22 455.65 L762.33 454.18 L764.27 454.18 L764.38 455.65 L765.61 456.16 L766.73 455.20 L768.10 456.57 L767.14 457.69 L767.65 458.92 L769.12 459.03 L769.12 460.97 L767.65 461.08 L767.14 462.31 L768.10 463.43 L766.73 464.80 L765.61 463.84 L764.38 464.35 L764.27 465.82 L762.33 465.82 L762.22 464.35 L760.99 463.84 L759.87 464.80 L758.50 463.43 L759.46 462.31 L758.95 461.08 L757.48 460.97 L757.48 459.03 L758.95 458.92 L759.46 457.69 L758.50 456.57 L759.87 455.20 L760.99 456.16 Z" fill="url(#gg)" stroke="#767676" stroke-width="1" stroke-linejoin="round"/>
<path d="M766.33 460.49 L766.43 459.17 L768.17 459.17 L768.27 460.49 L769.38 460.95 L770.38 460.09 L771.61 461.32 L770.75 462.32 L771.21 463.43 L772.53 463.53 L772.53 465.27 L771.21 465.37 L770.75 466.48 L771.61 467.48 L770.38 468.71 L769.38 467.85 L768.27 468.31 L768.17 469.63 L766.43 469.63 L766.33 468.31 L765.22 467.85 L764.22 468.71 L762.99 467.48 L763.85 466.48 L763.39 465.37 L762.07 465.27 L762.07 463.53 L763.39 463.43 L763.85 462.32 L762.99 461.32 L764.22 460.09 L765.22 460.95 Z" fill="url(#gg)" stroke="#767676" stroke-width="1" stroke-linejoin="round"/>
<text x="778.4" y="466.6" style="fill:#454545" >Solver</text>
<path d="M219.0 164.0 V168.5 L213.8 172.1" fill="none" stroke="#6e5322" stroke-width="3.9" stroke-linecap="round" stroke-linejoin="round"/>
<path d="M219.0 164.0 V168.5 L213.8 172.1" fill="none" stroke="#ffffff" stroke-width="1.7" stroke-linecap="round" stroke-linejoin="round"/>
<path d="M209.0 164.0 V168.5 L213.8 172.1" fill="none" stroke="#6e5322" stroke-width="3.7" stroke-linecap="round" stroke-linejoin="round"/>
<path d="M213.8 172.1 V176.0" fill="none" stroke="#6e5322" stroke-width="3.7" stroke-linecap="round"/>
<text x="237" y="173.8" class="b" style="fill:#262626" >Left : sl_aircraft1.slx</text>
<path d="M677 167 L681.5 171.5 L686 167" fill="none" stroke="#666" stroke-width="1"/>
<path d="M706.0 164.0 V168.5 L710.8 172.1" fill="none" stroke="#0a6dc2" stroke-width="3.9" stroke-linecap="round" stroke-linejoin="round"/>
<path d="M706.0 164.0 V168.5 L710.8 172.1" fill="none" stroke="#ffffff" stroke-width="1.7" stroke-linecap="round" stroke-linejoin="round"/>
<path d="M716.0 164.0 V168.5 L710.8 172.1" fill="none" stroke="#0a6dc2" stroke-width="3.7" stroke-linecap="round" stroke-linejoin="round"/>
<path d="M710.8 172.1 V176.0" fill="none" stroke="#0a6dc2" stroke-width="3.7" stroke-linecap="round"/>
<text x="733.6" y="173.8" class="b" style="fill:#262626" >Right : sl_aircraft2.slx</text>
<path d="M1173 167 L1177.5 171.5 L1182 167" fill="none" stroke="#666" stroke-width="1"/>
<rect x="200" y="184" width="496" height="3" fill="#6e5322"/>
<rect x="697" y="184" width="495" height="3" fill="#0a6dc2"/>
<rect x="696" y="156" width="1" height="408" fill="#bdbdbd"/>
<rect x="200" y="563" width="496" height="1" fill="#bdbdbd"/>
<rect x="200" y="564" width="496" height="25" fill="#f5f5f5"/>
<rect x="200" y="589" width="496" height="1" fill="#8c8c8c"/>
<rect x="200" y="590" width="496" height="22" fill="#f3e3fc"/>
<rect x="201" y="590" width="3" height="22" fill="#a100f2"/>
<text x="213.7" y="580.7" class="b" style="fill:#262626" >Parameter Name</text>
<text x="403" y="580.7" class="b" style="fill:#262626" >Value</text>
<text x="213.7" y="605.8" style="fill:#454545" >Gain</text>
<text x="403" y="605.8" style="fill:#454545" >Uo</text>
<rect x="672.5" y="566.5" width="19.5" height="19" rx="4" fill="#f5f5f5" stroke="#6e6e6e" stroke-width="1"/>
<rect x="676" y="571" width="12" height="1.6" fill="#555"/><path d="M676 580 L682 574.3 L688 580 Z" fill="#555"/>
<rect x="697" y="563" width="495" height="1" fill="#bdbdbd"/>
<rect x="697" y="564" width="495" height="25" fill="#f5f5f5"/>
<rect x="697" y="589" width="495" height="1" fill="#8c8c8c"/>
<rect x="697" y="590" width="495" height="22" fill="#f3e3fc"/>
<rect x="698" y="590" width="3" height="22" fill="#a100f2"/>
<text x="710.7" y="580.7" class="b" style="fill:#262626" >Parameter Name</text>
<text x="900" y="580.7" class="b" style="fill:#262626" >Value</text>
<text x="710.7" y="605.8" style="fill:#454545" >Gain</text>
<text x="900" y="605.8" style="fill:#454545" >-Uo</text>
<rect x="1168.5" y="566.5" width="19.5" height="19" rx="4" fill="#f5f5f5" stroke="#6e6e6e" stroke-width="1"/>
<rect x="1172" y="571" width="12" height="1.6" fill="#555"/><path d="M1172 580 L1178 574.3 L1184 580 Z" fill="#555"/>
<rect x="695" y="563" width="3" height="120" fill="#c4c4c4"/>
<rect x="200" y="563" width="1" height="120" fill="#c8c8c8"/>
<rect x="1191" y="563" width="1" height="120" fill="#a8a8a8"/>
<rect x="0" y="683" width="1192" height="25" fill="#f5f5f5"/>
<rect x="16" y="690" width="12" height="12" fill="#cce4f8" stroke="#0b6fc4" stroke-width="2"/>
<text x="34" y="699.7" style="font-size:14px;fill:#262626" >Insertion</text>
<rect x="105" y="690" width="12" height="12" fill="#fdf3e2" stroke="#6e5322" stroke-width="2"/>
<text x="123.3" y="699.7" style="font-size:14px;fill:#262626" >Deletion</text>
<rect x="191" y="690" width="12" height="12" fill="#f3e3fc" stroke="#a100f2" stroke-width="2"/>
<text x="208.7" y="699.7" style="font-size:14px;fill:#262626" textLength="76.5" lengthAdjust="spacingAndGlyphs" >Modification</text>
<rect x="824.5" y="351.5" width="223" height="27" fill="#ffffff" stroke="#7a7a7a" stroke-width="1"/>
<rect x="825.5" y="352.5" width="221" height="25" fill="#ffffff" stroke="#1f80d2" stroke-width="1"/>
<text x="833.5" y="368.8" style="fill:#262626" >Hide all model elements of type 'Lines'</text>
<path d="M844 364.6 V376.2 L846.8 373.6 L849.8 380.8 L852.2 379.8 L849.2 373 L852.8 373 Z" fill="#000" stroke="#fff" stroke-width="1" paint-order="stroke" stroke-linejoin="miter"/>
</svg>
</body></html>
